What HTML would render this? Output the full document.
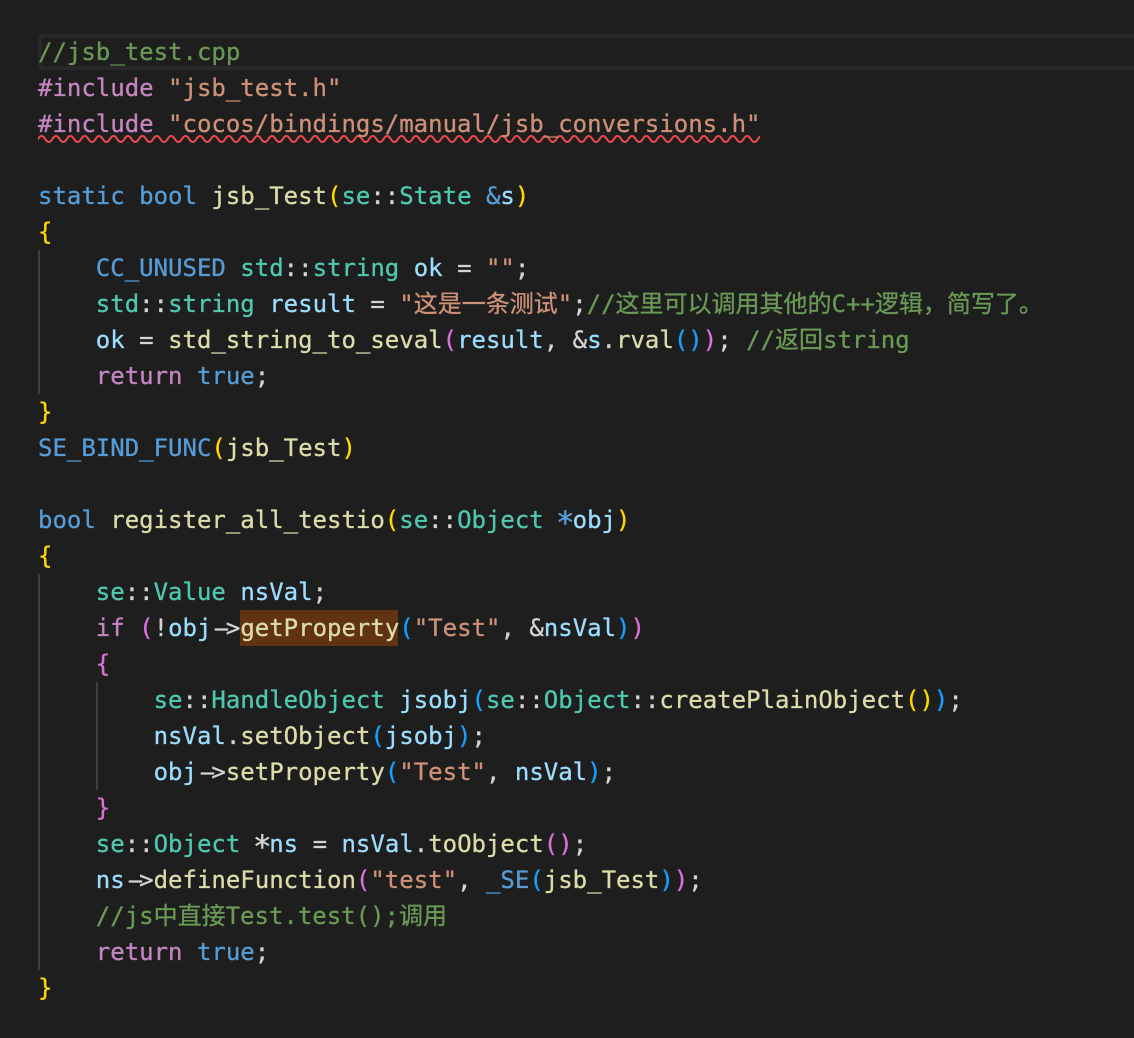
<!DOCTYPE html>
<html><head><meta charset="utf-8"><style>
html,body{margin:0;padding:0;background:#1e1e1e;width:1134px;height:1038px;overflow:hidden}
.l{position:absolute;left:38px;height:36px;line-height:36px;white-space:pre;font-family:"DejaVu Sans Mono","Noto Sans CJK SC",monospace;font-size:24px;color:#d4d4d4;font-variant-ligatures:none;-webkit-text-stroke:.3px currentColor}
.c{color:#6a9955}.s{color:#ce9178}.p{color:#c586c0}.k{color:#569cd6}.f{color:#dcdcaa}.t{color:#4ec9b0}.v{color:#9cdcfe}
.g{color:#ffd700}.o{color:#da70d6}.b{color:#179fff}
.r{position:absolute}
.h{display:inline-block;transform:scaleX(2.1) translateX(1.5px)}
.a{display:inline-block;transform:translateY(3px) scale(1.3)}
</style></head><body>
<div class="r" style="left:38px;top:34px;width:1096px;height:36px;box-sizing:border-box;border:4px solid #282828;border-right:0"></div>
<div class="r" style="left:38px;top:250px;width:2px;height:144px;background:#404040"></div>
<div class="r" style="left:38px;top:574px;width:2px;height:396px;background:#404040"></div>
<div class="r" style="left:96px;top:682px;width:2px;height:108px;background:#404040"></div>
<div class="r" style="left:240px;top:610px;width:158px;height:36px;background:#613214"></div>
<svg class="r" style="left:38px;top:135px" width="722" height="8" viewBox="0 0 722 8"><defs><pattern id="w" width="14.4" height="8" patternUnits="userSpaceOnUse"><path fill="none" stroke="#f14c4c" stroke-width="2" d="M-14.4 4 Q-10.8 -2 -7.2 4 T0 4 Q3.6 -2 7.2 4 T14.4 4 Q18 -2 21.6 4"/></pattern></defs><rect width="722" height="8" fill="url(#w)"/></svg>
<div class="l" style="top:34px"><span class="c">//jsb_test.cpp</span></div>
<div class="l" style="top:70px"><span class="p">#include</span> <span class="s">"jsb_test.h"</span></div>
<div class="l" style="top:106px"><span class="p">#include</span> <span class="s">"cocos/bindings/manual/jsb_conversions.h"</span></div>
<div class="l" style="top:178px"><span class="k">static</span> <span class="k">bool</span> <span class="f">jsb_Test</span><span class="g">(</span><span class="t">se</span>::<span class="t">State</span> <span class="k">&amp;</span><span class="v">s</span><span class="g">)</span></div>
<div class="l" style="top:214px"><span class="g">{</span></div>
<div class="l" style="top:250px">    <span class="k">CC_UNUSED</span> <span class="t">std</span>::<span class="t">string</span> <span class="v">ok</span> = <span class="s">""</span>;</div>
<div class="l" style="top:286px">    <span class="t">std</span>::<span class="t">string</span> <span class="v">result</span> = <span class="s">"这是一条测试"</span>;<span class="c">//这里可以调用其他的C++逻辑，简写了。</span></div>
<div class="l" style="top:322px">    <span class="v">ok</span> = <span class="f">std_string_to_seval</span><span class="o">(</span><span class="v">result</span>, &amp;<span class="v">s</span>.<span class="f">rval</span><span class="b">()</span><span class="o">)</span>; <span class="c">//返回string</span></div>
<div class="l" style="top:358px">    <span class="p">return</span> <span class="k">true</span>;</div>
<div class="l" style="top:394px"><span class="g">}</span></div>
<div class="l" style="top:430px"><span class="k">SE_BIND_FUNC</span><span class="g">(</span><span class="f">jsb_Test</span><span class="g">)</span></div>
<div class="l" style="top:502px"><span class="k">bool</span> <span class="f">register_all_testio</span><span class="g">(</span><span class="t">se</span>::<span class="t">Object</span> <span class="k a">*</span><span class="v">obj</span><span class="g">)</span></div>
<div class="l" style="top:538px"><span class="g">{</span></div>
<div class="l" style="top:574px">    <span class="t">se</span>::<span class="t">Value</span> <span class="v">nsVal</span>;</div>
<div class="l" style="top:610px">    <span class="p">if</span> <span class="o">(</span>!<span class="v">obj</span><span class="h">-</span>&gt;<span class="f">getProperty</span><span class="b">(</span><span class="s">"Test"</span>, &amp;<span class="v">nsVal</span><span class="b">)</span><span class="o">)</span></div>
<div class="l" style="top:646px">    <span class="o">{</span></div>
<div class="l" style="top:682px">        <span class="t">se</span>::<span class="t">HandleObject</span> <span class="v">jsobj</span><span class="b">(</span><span class="t">se</span>::<span class="t">Object</span>::<span class="f">createPlainObject</span><span class="g">()</span><span class="b">)</span>;</div>
<div class="l" style="top:718px">        <span class="v">nsVal</span>.<span class="f">setObject</span><span class="b">(</span><span class="v">jsobj</span><span class="b">)</span>;</div>
<div class="l" style="top:754px">        <span class="v">obj</span><span class="h">-</span>&gt;<span class="f">setProperty</span><span class="b">(</span><span class="s">"Test"</span>, <span class="v">nsVal</span><span class="b">)</span>;</div>
<div class="l" style="top:790px">    <span class="o">}</span></div>
<div class="l" style="top:826px">    <span class="t">se</span>::<span class="t">Object</span> <span class="a">*</span><span class="v">ns</span> = <span class="v">nsVal</span>.<span class="f">toObject</span><span class="o">()</span>;</div>
<div class="l" style="top:862px">    <span class="v">ns</span><span class="h">-</span>&gt;<span class="f">defineFunction</span><span class="o">(</span><span class="s">"test"</span>, <span class="k">_SE</span><span class="b">(</span><span class="f">jsb_Test</span><span class="b">)</span><span class="o">)</span>;</div>
<div class="l" style="top:898px">    <span class="c">//js中直接Test.test();调用</span></div>
<div class="l" style="top:934px">    <span class="p">return</span> <span class="k">true</span>;</div>
<div class="l" style="top:970px"><span class="g">}</span></div>
</body></html>
